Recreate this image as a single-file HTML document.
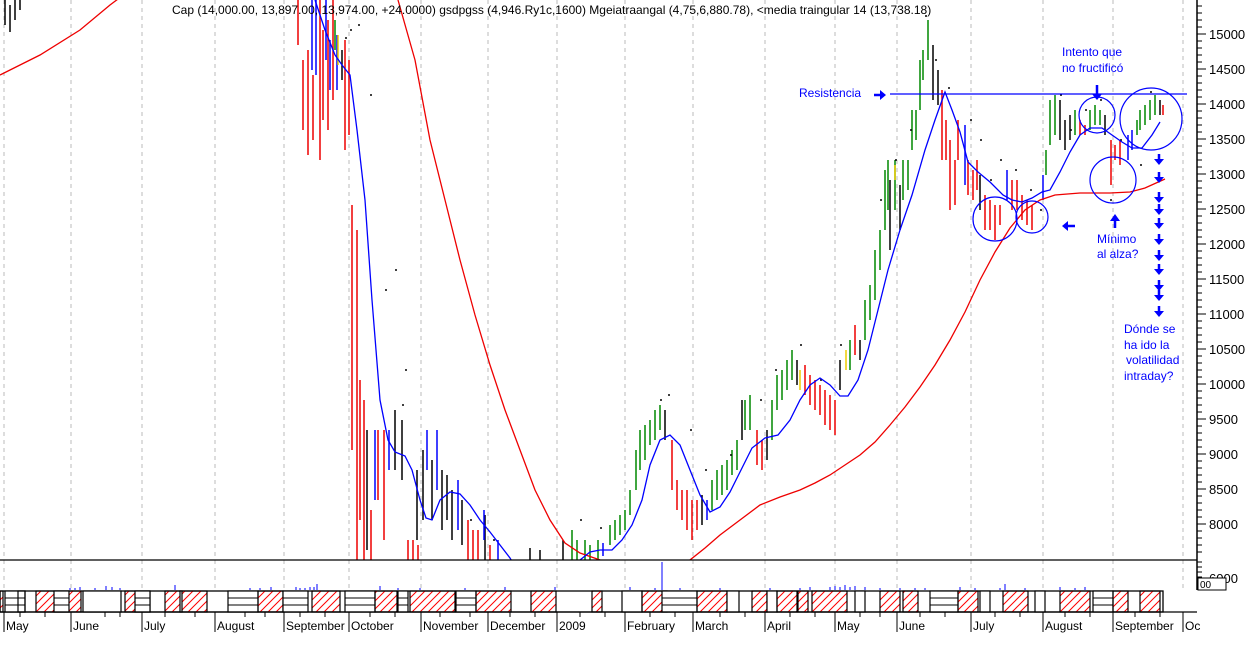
<!DOCTYPE html>
<html><head><meta charset="utf-8"><style>
html,body{margin:0;padding:0;background:#fff;}
svg{display:block;font-family:"Liberation Sans",sans-serif;}
</style></head><body>
<svg width="1250" height="661" viewBox="0 0 1250 661" xmlns="http://www.w3.org/2000/svg">
<defs>
<pattern id="h" width="8" height="8" patternUnits="userSpaceOnUse"><path d="M-2,10 L10,-2 M6,10 L10,6 M-2,2 L2,-2" stroke="#f00" stroke-width="1"/></pattern>
<clipPath id="c"><rect x="0" y="0" width="1197" height="560"/></clipPath>
</defs>
<rect width="1250" height="661" fill="#fff"/>
<path stroke="#bbb" stroke-dasharray="4,4" stroke-width="1" fill="none" d="M4,0V590M71,0V590M142,0V590M215,0V590M284,0V590M349,0V590M421,0V590M488,0V590M557,0V590M625,0V590M693,0V590M765,0V590M835,0V590M897,0V590M971,0V590M1043,0V590M1113,0V590M1183,0V590"/>
<g clip-path="url(#c)" fill="none" stroke-width="1.5">
<path stroke="#000" d="M5,0V25M10,5V32M15,0V20M20,0V10M342,50V80M367,430V550M395,410V470M402,420V480M417,470V540M423,450V520M432,460V520M442,470V530M447,475V520M452,490V540M462,500V545M485,515V560M530,548V560M540,550V560M563,540V560M665,410V440M702,495V525M742,400V440M767,430V460M797,360V385M840,360V390M860,340V360M890,180V250M900,185V230M933,45V100M938,70V105M980,175V210M1060,100V140M1065,120V150M1070,115V140M1105,115V135M1160,100V115"/>
<path stroke="#e00" d="M298,0V45M303,60V130M308,50V155M313,75V140M320,0V160M323,30V120M328,20V130M333,0V100M345,40V150M349,60V135M352,205V450M357,230V560M360,380V520M364,400V560M371,510V560M378,430V500M384,430V540M408,540V560M413,540V560M418,545V560M468,520V560M473,530V560M478,530V560M490,545V560M672,440V490M677,480V510M682,490V520M687,490V530M692,500V540M697,500V530M757,430V465M762,440V470M805,365V395M810,375V405M815,380V410M820,385V415M825,390V425M830,395V430M835,400V435M855,325V355M942,90V160M946,120V160M950,140V210M955,160V205M958,120V160M968,160V195M973,170V200M977,160V190M985,195V230M990,200V230M995,205V240M1000,205V225M1012,180V210M1017,180V210M1022,195V220M1027,200V225M1032,205V230M1080,120V135M1085,125V135M1111,140V185M1115,145V160M1120,140V165M1163,105V115"/>
<path stroke="#00f" d="M312,0V70M316,0V75M326,0V60M330,40V90M337,35V90M375,430V500M389,430V470M427,430V470M437,430V490M458,480V530M484,510V540M498,540V560M603,543V556M707,500V520M965,125V185M1007,170V200M1043,175V200M1128,135V160M1132,130V150"/>
<path stroke="#080" d="M335,20V50M572,530V560M577,540V560M585,540V560M590,545V560M598,540V560M610,525V545M615,520V540M620,515V535M625,510V530M630,490V515M636,450V490M640,430V470M645,425V460M650,420V445M655,410V440M660,405V430M712,480V510M717,470V500M722,465V495M727,460V490M732,450V475M737,440V470M745,400V430M750,395V430M772,400V440M777,375V410M782,370V400M787,360V390M792,350V380M850,340V370M865,300V340M870,285V320M875,250V300M880,230V270M885,170V230M888,160V210M895,160V210M903,160V200M908,160V190M912,110V150M916,110V140M920,60V110M923,50V80M928,20V60M1046,150V175M1050,100V145M1055,95V135M1075,110V135M1090,110V130M1095,105V125M1100,110V125M1137,120V135M1140,110V130M1145,105V125M1150,100V120M1155,95V115"/>
<path stroke="#ec0" d="M338,35V65M800,370V390M846,350V370M895,165V180"/>
<path stroke="#000" stroke-width="1.5" d="M345,38h2M350,30h2M358,25h2M370,95h2M395,270h2M405,370h2M385,290h2M402,405h2M470,520h2M493,540h2M580,520h2M600,528h2M660,400h2M668,395h2M690,430h2M705,470h2M730,455h2M760,400h2M775,370h2M800,345h2M820,380h2M840,345h2M880,200h2M895,160h2M910,130h2M925,16h2M935,60h2M948,88h2M970,120h2M980,140h2M990,180h2M1000,160h2M1015,170h2M1030,190h2M1040,210h2M1060,95h2M1070,130h2M1085,110h2M1100,100h2M1110,200h2M1120,140h2M1140,165h2M1150,92h2"/>
<polyline stroke="#e00" stroke-width="1.3" points="0,75 40,55 80,30 110,5 130,-10"/>
<polyline stroke="#e00" stroke-width="1.3" points="398,0 415,60 430,140 445,200 460,260 475,315 490,365 505,410 520,450 535,490 550,520 565,543 580,553 600,560 620,575"/>
<polyline stroke="#e00" stroke-width="1.3" points="680,575 690,560 705,548 720,535 740,520 760,505 780,497 800,490 815,483 830,475 845,465 860,455 875,442 890,425 905,407 920,387 935,365 950,340 965,312 980,280 995,252 1010,228 1025,210 1040,200 1055,195 1080,193 1110,193 1130,192 1145,188 1165,179"/>
<polyline stroke="#00f" stroke-width="1.3" points="315,0 325,30 335,55 342,65 350,75 357,130 365,200 372,300 380,400 388,440 395,452 405,456 412,470 420,500 426,518 432,520 440,500 450,492 460,494 470,505 480,520 490,532 500,545 510,558 520,575"/>
<polyline stroke="#00f" stroke-width="1.3" points="580,560 590,552 600,550 612,550 622,540 632,525 642,500 650,465 660,440 670,435 680,445 690,470 700,495 710,512 720,507 730,492 742,468 752,448 765,438 778,435 790,420 800,400 810,385 820,378 830,385 840,396 848,396 858,380 868,350 878,310 888,270 900,230 912,195 925,150 935,120 945,92 952,110 960,132 968,162 978,172 990,182 1003,195 1012,200 1022,202 1032,198 1042,192 1050,190 1060,172 1070,152 1080,135 1090,128 1102,128 1112,135 1122,142 1132,148 1142,148 1152,135 1160,122"/>
</g>
<line x1="890" y1="94" x2="1187" y2="94" stroke="#00f" stroke-width="1.3"/>
<g fill="none" stroke="#00f" stroke-width="1.2">
<circle cx="995" cy="219" r="22"/><circle cx="1032" cy="217" r="16"/>
<circle cx="1097" cy="115" r="18"/><circle cx="1113" cy="180" r="23"/><circle cx="1151" cy="119" r="31"/>
</g>
<g fill="#00f" font-size="12">
<text x="799" y="97">Resistencia</text>
<text x="1062" y="56">Intento que</text>
<text x="1062" y="72">no fructificó</text>
<text x="1097" y="243">Mínimo</text>
<text x="1097" y="258">al alza?</text>
<text x="1124" y="333">Dónde se</text>
<text x="1124" y="349">ha ido la</text>
<text x="1126" y="364">volatilidad</text>
<text x="1124" y="380">intraday?</text>
</g>
<g fill="#00f">
<path stroke="#00f" stroke-width="2.5" d="M1159,154V160M1159,172V178M1159,192V198M1159,204V210M1159,218V224M1159,234V240M1159,250V256M1159,264V270M1159,280V286M1159,290V296M1159,306V312M1097,85V95M1115,220V228M1067,226H1075M874,95H880"/>
<path d="M1154,159h10l-5,6zM1154,177h10l-5,6zM1154,197h10l-5,6zM1154,209h10l-5,6zM1154,223h10l-5,6zM1154,239h10l-5,6zM1154,255h10l-5,6zM1154,269h10l-5,6zM1154,285h10l-5,6zM1154,295h10l-5,6zM1154,311h10l-5,6zM1092,94h10l-5,6zM1110,221h10l-5,-7zM1068,221v10l-6,-5zM880,90v10l6,-5z"/>
</g>
<text x="172" y="14" font-size="12" fill="#000">Cap (14,000.00, 13,897.00, 13,974.00, +24.0000) gsdpgss (4,946.Ry1c,1600) Mgeiatraangal (4,75,6,880.78), &lt;media traingular 14 (13,738.18)</text>
<line x1="1197" y1="0" x2="1197" y2="590" stroke="#000" stroke-width="1.5"/>
<path stroke="#000" fill="none" d="M1197,34h9M1197,69h9M1197,104h9M1197,139h9M1197,174h9M1197,209h9M1197,244h9M1197,279h9M1197,314h9M1197,349h9M1197,384h9M1197,419h9M1197,454h9M1197,489h9M1197,524h9M1197,6h5M1197,13h5M1197,20h5M1197,27h5M1197,41h5M1197,48h5M1197,55h5M1197,62h5M1197,76h5M1197,83h5M1197,90h5M1197,97h5M1197,111h5M1197,118h5M1197,125h5M1197,132h5M1197,146h5M1197,153h5M1197,160h5M1197,167h5M1197,181h5M1197,188h5M1197,195h5M1197,202h5M1197,216h5M1197,223h5M1197,230h5M1197,237h5M1197,251h5M1197,258h5M1197,265h5M1197,272h5M1197,286h5M1197,293h5M1197,300h5M1197,307h5M1197,321h5M1197,328h5M1197,335h5M1197,342h5M1197,356h5M1197,363h5M1197,370h5M1197,377h5M1197,391h5M1197,398h5M1197,405h5M1197,412h5M1197,426h5M1197,433h5M1197,440h5M1197,447h5M1197,461h5M1197,468h5M1197,475h5M1197,482h5M1197,496h5M1197,503h5M1197,510h5M1197,517h5M1197,531h5M1197,538h5M1197,545h5M1197,552h5M1197,562h5M1197,567h5M1197,572h5M1197,577h5"/>
<g font-size="13" fill="#000">
<text x="1209" y="39">15000</text><text x="1209" y="74">14500</text><text x="1209" y="109">14000</text><text x="1209" y="144">13500</text><text x="1209" y="179">13000</text><text x="1209" y="214">12500</text><text x="1209" y="249">12000</text><text x="1209" y="284">11500</text><text x="1209" y="319">11000</text><text x="1209" y="354">10500</text><text x="1209" y="389">10000</text><text x="1209" y="424">9500</text><text x="1209" y="459">9000</text><text x="1209" y="494">8500</text><text x="1209" y="529">8000</text><text x="1209" y="583">6000</text>
</g>
<line x1="0" y1="560" x2="1197" y2="560" stroke="#000" stroke-width="1.2"/>
<path stroke="#00f" d="M70,590v-2M75,590v-2M80,590v-3M95,590v-2M106,590v-4M112,590v-3M120,590v-2M175,590v-5M250,590v-2M260,590v-2M271,590v-3M296,590v-3M300,590v-2M305,590v-2M310,590v-3M314,590v-3M317,590v-6M380,590v-4M398,590v-2M420,590v-2M465,590v-2M505,590v-3M555,590v-3M630,590v-3M655,590v-2M662,590v-28M680,590v-2M720,590v-2M770,590v-2M800,590v-2M810,590v-3M830,590v-3M835,590v-4M840,590v-3M845,590v-5M850,590v-3M855,590v-4M865,590v-3M880,590v-2M900,590v-2M915,590v-2M925,590v-2M960,590v-3M975,590v-2M1000,590v-2M1005,590v-6M1025,590v-2M1060,590v-3M1075,590v-2M1085,590v-3"/>
<rect x="1198" y="578" width="28" height="12" fill="#fff" stroke="#000"/>
<text x="1200" y="588" font-size="10">00</text>
<rect x="0" y="591" width="1163" height="21" fill="#fff" stroke="#000" stroke-width="1.3"/>
<g stroke="#000" stroke-width="1.2">
<rect x="0" y="591" width="3" height="21" fill="url(#h)"/>
<rect x="5" y="591" width="20" height="21" fill="#fff"/><rect x="18" y="591" width="7" height="21" fill="none"/>
<rect x="36" y="591" width="45" height="21" fill="url(#h)"/>
<rect x="54" y="591" width="15" height="21" fill="#fff"/>
<rect x="83" y="591" width="38" height="21" fill="#fff"/>
<rect x="125" y="591" width="25" height="21" fill="url(#h)"/>
<rect x="135" y="591" width="15" height="21" fill="#fff"/>
<rect x="165" y="591" width="42" height="21" fill="url(#h)"/>
<rect x="180" y="591" width="2" height="21" fill="#fff"/>
<rect x="228" y="591" width="30" height="21" fill="#fff"/>
<rect x="258" y="591" width="25" height="21" fill="url(#h)"/>
<rect x="283" y="591" width="25" height="21" fill="#fff"/>
<rect x="312" y="591" width="28" height="21" fill="url(#h)"/>
<rect x="345" y="591" width="30" height="21" fill="#fff"/>
<rect x="375" y="591" width="22" height="21" fill="url(#h)"/>
<rect x="398" y="591" width="10" height="21" fill="#fff"/>
<rect x="410" y="591" width="45" height="21" fill="url(#h)"/>
<rect x="456" y="591" width="20" height="21" fill="#fff"/>
<rect x="476" y="591" width="35" height="21" fill="url(#h)"/>
<rect x="531" y="591" width="25" height="21" fill="url(#h)"/>
<rect x="592" y="591" width="10" height="21" fill="url(#h)"/>
<rect x="622" y="591" width="20" height="21" fill="#fff"/>
<rect x="642" y="591" width="25" height="21" fill="url(#h)"/>
<rect x="662" y="591" width="35" height="21" fill="#fff"/>
<rect x="697" y="591" width="30" height="21" fill="url(#h)"/>
<rect x="727" y="591" width="12" height="21" fill="#fff"/>
<rect x="752" y="591" width="15" height="21" fill="url(#h)"/>
<rect x="767" y="591" width="10" height="21" fill="#fff"/>
<rect x="777" y="591" width="20" height="21" fill="url(#h)"/>
<rect x="798" y="591" width="10" height="21" fill="url(#h)"/>
<rect x="812" y="591" width="35" height="21" fill="url(#h)"/>
<rect x="855" y="591" width="10" height="21" fill="#fff"/>
<rect x="880" y="591" width="20" height="21" fill="url(#h)"/>
<rect x="903" y="591" width="15" height="21" fill="url(#h)"/>
<rect x="930" y="591" width="28" height="21" fill="#fff"/>
<rect x="958" y="591" width="20" height="21" fill="url(#h)"/>
<rect x="980" y="591" width="10" height="21" fill="#fff"/>
<rect x="1003" y="591" width="25" height="21" fill="url(#h)"/>
<rect x="1035" y="591" width="10" height="21" fill="#fff"/>
<rect x="1060" y="591" width="30" height="21" fill="url(#h)"/>
<rect x="1093" y="591" width="20" height="21" fill="#fff"/>
<rect x="1113" y="591" width="15" height="21" fill="url(#h)"/>
<rect x="1140" y="591" width="20" height="21" fill="url(#h)"/>
</g>
<path stroke="#000" fill="none" d="M5,598h20M5,605h20M54,598h15M54,605h15M135,598h15M135,605h15M228,598h30M228,605h30M283,598h25M283,605h25M345,598h30M345,605h30M398,598h10M398,605h10M456,598h20M456,605h20M662,598h35M662,605h35M930,598h28M930,605h28M1093,598h20M1093,605h20"/>
<line x1="0" y1="612" x2="1197" y2="612" stroke="#000" stroke-width="1.3"/>
<path stroke="#000" fill="none" d="M4,612v20M71,612v20M142,612v20M215,612v20M284,612v20M349,612v20M421,612v20M488,612v20M557,612v20M625,612v20M693,612v20M765,612v20M835,612v20M897,612v20M971,612v20M1043,612v20M1113,612v20M1183,612v20M20,612v5M45,612v5M105,612v5M120,612v5M165,612v5M195,612v5M245,612v5M265,612v5M300,612v5M325,612v5M370,612v5M395,612v5M440,612v5M470,612v5M510,612v5M535,612v5M580,612v5M605,612v5M650,612v5M675,612v5M720,612v5M745,612v5M790,612v5M815,612v5M860,612v5M880,612v5M920,612v5M945,612v5M995,612v5M1020,612v5M1065,612v5M1090,612v5M1135,612v5M1160,612v5"/>
<g font-size="12" fill="#000">
<text x="6" y="630">May</text><text x="73" y="630">June</text><text x="144" y="630">July</text><text x="217" y="630">August</text><text x="286" y="630">September</text><text x="351" y="630">October</text><text x="423" y="630">November</text><text x="490" y="630">December</text><text x="559" y="630">2009</text><text x="627" y="630">February</text><text x="695" y="630">March</text><text x="767" y="630">April</text><text x="837" y="630">May</text><text x="899" y="630">June</text><text x="973" y="630">July</text><text x="1045" y="630">August</text><text x="1115" y="630">September</text><text x="1185" y="630">Oc</text>
</g>
</svg>
</body></html>
